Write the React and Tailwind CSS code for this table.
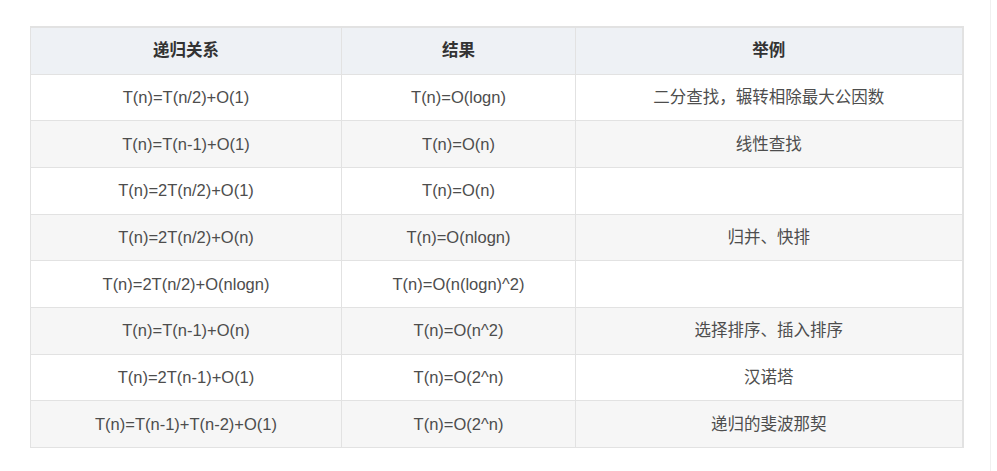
import React from "react";

const rows = [
  ["T(n)=T(n/2)+O(1)", "T(n)=O(logn)", "二分查找，辗转相除最大公因数"],
  ["T(n)=T(n-1)+O(1)", "T(n)=O(n)", "线性查找"],
  ["T(n)=2T(n/2)+O(1)", "T(n)=O(n)", ""],
  ["T(n)=2T(n/2)+O(n)", "T(n)=O(nlogn)", "归并、快排"],
  ["T(n)=2T(n/2)+O(nlogn)", "T(n)=O(n(logn)^2)", ""],
  ["T(n)=T(n-1)+O(n)", "T(n)=O(n^2)", "选择排序、插入排序"],
  ["T(n)=2T(n-1)+O(1)", "T(n)=O(2^n)", "汉诺塔"],
  ["T(n)=T(n-1)+T(n-2)+O(1)", "T(n)=O(2^n)", "递归的斐波那契"],
];

const App = () => {
  return (
    <div
      className="flex h-[471px] w-[997px] bg-white"
      style={{ fontFamily: '"Liberation Sans", "Noto Sans CJK SC", sans-serif' }}
    >
      <div className="w-[991px] border-r border-[#f0f0f0] pl-[30px] pt-[26px]">
        <table className="w-[932px] table-fixed border-collapse border-t-2 border-r-2 border-[#e2e2e2] text-[16.5px] text-[#4d4d4d]">
          <colgroup>
            <col className="w-[311px]" />
            <col className="w-[234px]" />
            <col className="w-[387px]" />
          </colgroup>
          <thead>
            {/* Header row */}
            <tr className="h-[47px] bg-[#eef1f5]">
              <th className="border border-[#e2e2e2] font-bold text-[#333]">递归关系</th>
              <th className="border border-[#e2e2e2] font-bold text-[#333]">结果</th>
              <th className="border border-[#e2e2e2] font-bold text-[#333]">举例</th>
            </tr>
          </thead>
          <tbody>
            {rows.map((r, i) => (
              <tr
                key={i}
                className={`h-[46.7px] ${i % 2 === 1 ? "bg-[#f6f6f6]" : "bg-white"}`}
              >
                {r.map((c, j) => (
                  <td key={j} className="border border-[#e2e2e2] text-center">
                    {c}
                  </td>
                ))}
              </tr>
            ))}
          </tbody>
        </table>
      </div>
    </div>
  );
};

export default App;
